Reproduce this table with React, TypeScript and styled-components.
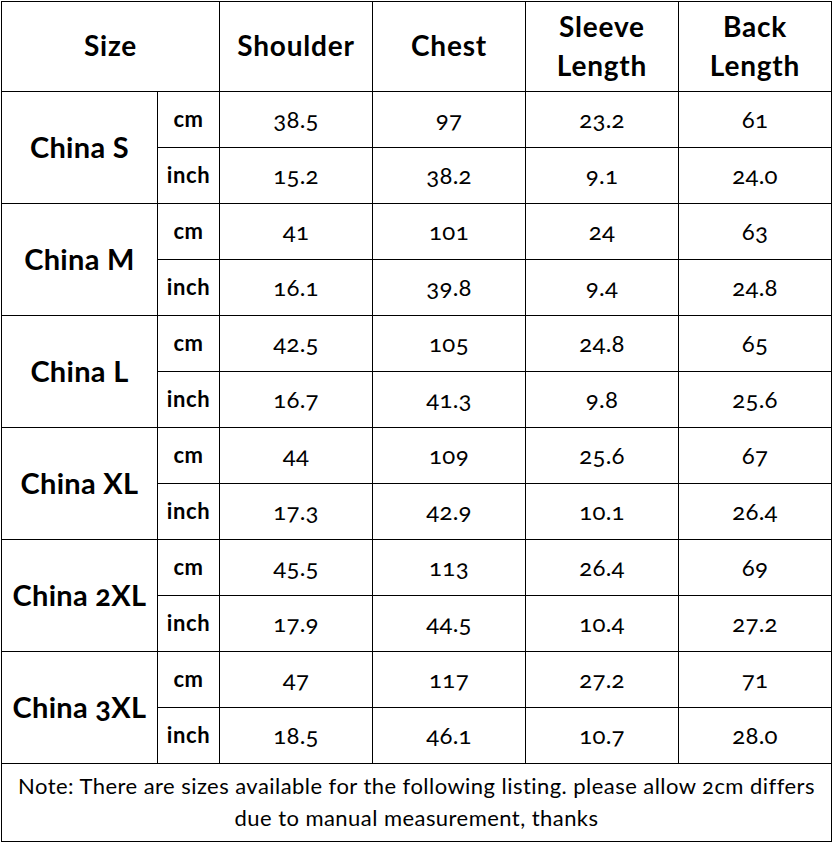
import React from "react";
import styled, { createGlobalStyle } from "styled-components";

const GlobalStyle = createGlobalStyle`
  html, body { margin: 0; padding: 0; background: #fff; }
  body { font-family: "Lato", "Open Sans", sans-serif; color: #000; }
`;

const Page = styled.div`
  padding: 1px 0 0 1px;
  background: #fff;
`;

const Grid = styled.div`
  display: grid;
  width: 831px;
  grid-template-columns: 155px 61px 152px 152px 152px 152px;
  grid-template-rows: 89px repeat(12, 55px) 77px;
  gap: 1px;
  padding: 1px;
  box-sizing: border-box;
  background: #000;
`;

const Cell = styled.div<{ $span?: number; $rows?: number }>`
  background: #fff;
  display: flex;
  align-items: center;
  justify-content: center;
  text-align: center;
  grid-column: ${(p) => (p.$span ? `span ${p.$span}` : "auto")};
  grid-row: ${(p) => (p.$rows ? `span ${p.$rows}` : "auto")};
`;

const HeadCell = styled(Cell)`
  font-family: "Lato", sans-serif;
  font-weight: 700;
  font-size: 28px;
  letter-spacing: 0.8px;
  line-height: 39px;
  padding-bottom: 2px;
`;

const SizeCell = styled(Cell)`
  font-family: "Lato", sans-serif;
  font-weight: 700;
  font-size: 29px;
  letter-spacing: 0.3px;
  font-variant-numeric: oldstyle-nums;
  font-feature-settings: "onum" 1;
  padding-bottom: 2px;
`;

const UnitCell = styled(Cell)`
  font-family: "Lato", sans-serif;
  font-weight: 700;
  font-size: 22px;
  letter-spacing: 0.6px;
  padding-bottom: 2px;
`;

const ValueCell = styled(Cell)`
  font-family: "Lato", sans-serif;
  font-size: 24px;
  letter-spacing: 0.3px;
  font-variant-numeric: oldstyle-nums;
  font-feature-settings: "onum" 1;
  padding-bottom: 2px;
`;

const NoteCell = styled(Cell)`
  font-family: "Lato", sans-serif;
  font-size: 22px;
  letter-spacing: 0.45px;
  line-height: 32px;
  font-variant-numeric: oldstyle-nums;
  font-feature-settings: "onum" 1;
  padding: 0 4px 2px;
  white-space: nowrap;
`;

type Row = { size: string; cm: string[]; inch: string[] };

const rows: Row[] = [
  { size: "China S", cm: ["38.5", "97", "23.2", "61"], inch: ["15.2", "38.2", "9.1", "24.0"] },
  { size: "China M", cm: ["41", "101", "24", "63"], inch: ["16.1", "39.8", "9.4", "24.8"] },
  { size: "China L", cm: ["42.5", "105", "24.8", "65"], inch: ["16.7", "41.3", "9.8", "25.6"] },
  { size: "China XL", cm: ["44", "109", "25.6", "67"], inch: ["17.3", "42.9", "10.1", "26.4"] },
  { size: "China 2XL", cm: ["45.5", "113", "26.4", "69"], inch: ["17.9", "44.5", "10.4", "27.2"] },
  { size: "China 3XL", cm: ["47", "117", "27.2", "71"], inch: ["18.5", "46.1", "10.7", "28.0"] },
];

export default function App() {
  return (
    <>
      <GlobalStyle />
      <Page>
        <Grid>
          <HeadCell $span={2}>Size</HeadCell>
          <HeadCell>Shoulder</HeadCell>
          <HeadCell>Chest</HeadCell>
          <HeadCell>
            Sleeve
            <br />
            Length
          </HeadCell>
          <HeadCell>
            Back
            <br />
            Length
          </HeadCell>
          {rows.map((r) => (
            <React.Fragment key={r.size}>
              <SizeCell $rows={2}>{r.size}</SizeCell>
              <UnitCell>cm</UnitCell>
              {r.cm.map((v, i) => (
                <ValueCell key={`c${i}`}>{v}</ValueCell>
              ))}
              <UnitCell>inch</UnitCell>
              {r.inch.map((v, i) => (
                <ValueCell key={`i${i}`}>{v}</ValueCell>
              ))}
            </React.Fragment>
          ))}
          <NoteCell $span={6}>
            Note: There are sizes available for the following listing. please allow 2cm differs
            <br />
            due to manual measurement, thanks
          </NoteCell>
        </Grid>
      </Page>
    </>
  );
}
